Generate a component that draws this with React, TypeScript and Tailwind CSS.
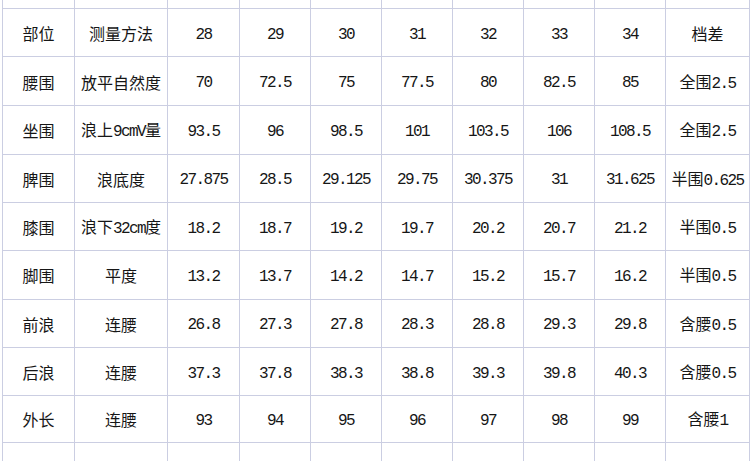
import React from "react";

const rows: string[][] = [
  ["部位", "测量方法", "28", "29", "30", "31", "32", "33", "34", "档差"],
  ["腰围", "放平自然度", "70", "72.5", "75", "77.5", "80", "82.5", "85", "全围2.5"],
  ["坐围", "浪上9cmV量", "93.5", "96", "98.5", "101", "103.5", "106", "108.5", "全围2.5"],
  ["脾围", "浪底度", "27.875", "28.5", "29.125", "29.75", "30.375", "31", "31.625", "半围0.625"],
  ["膝围", "浪下32cm度", "18.2", "18.7", "19.2", "19.7", "20.2", "20.7", "21.2", "半围0.5"],
  ["脚围", "平度", "13.2", "13.7", "14.2", "14.7", "15.2", "15.7", "16.2", "半围0.5"],
  ["前浪", "连腰", "26.8", "27.3", "27.8", "28.3", "28.8", "29.3", "29.8", "含腰0.5"],
  ["后浪", "连腰", "37.3", "37.8", "38.3", "38.8", "39.3", "39.8", "40.3", "含腰0.5"],
  ["外长", "连腰", "93", "94", "95", "96", "97", "98", "99", "含腰1"],
];

const heights = [50, 50, 50, 50, 49, 50, 50, 49, 48];

const gridCols =
  "grid grid-cols-[72px_93px_72px_71px_71px_71px_71px_71px_71px_85px]";

function Txt({ s }: { s: string }) {
  const parts = s.match(/[\x00-\x7F]+|[^\x00-\x7F]+/g) || [];
  return (
    <span className="whitespace-nowrap">
      {parts.map((p, i) =>
        /^[\x00-\x7F]+$/.test(p) ? (
          <span
            key={i}
            className="font-['Liberation_Mono',monospace] tracking-[-1.6px] text-[16px]"
          >
            {p}
          </span>
        ) : (
          <span
            key={i}
            className="font-['Noto_Sans_CJK_SC',sans-serif] text-[16px]"
          >
            {p}
          </span>
        )
      )}
    </span>
  );
}

function Row({ cells, h, top }: { cells: string[]; h: number; top: boolean }) {
  return (
    <div className={`${gridCols} pl-[2px]`} style={{ height: h }}>
      {cells.map((c, i) => (
        <div
          key={i}
          className={`flex items-center justify-center pt-[2px] border-l border-[#cbcee2] text-[#161616] ${
            top ? "border-t" : ""
          } ${i === cells.length - 1 ? "border-r" : ""}`}
        >
          <Txt s={c} />
        </div>
      ))}
    </div>
  );
}

export default function App() {
  const empty = Array(10).fill("");
  return (
    <div className="w-[750px] h-[461px] overflow-hidden bg-white flex flex-col leading-none">
      <Row cells={empty} h={8} top={false} />
      {rows.map((r, i) => (
        <Row key={i} cells={r} h={heights[i]} top={true} />
      ))}
      <Row cells={empty} h={20} top={true} />
    </div>
  );
}
